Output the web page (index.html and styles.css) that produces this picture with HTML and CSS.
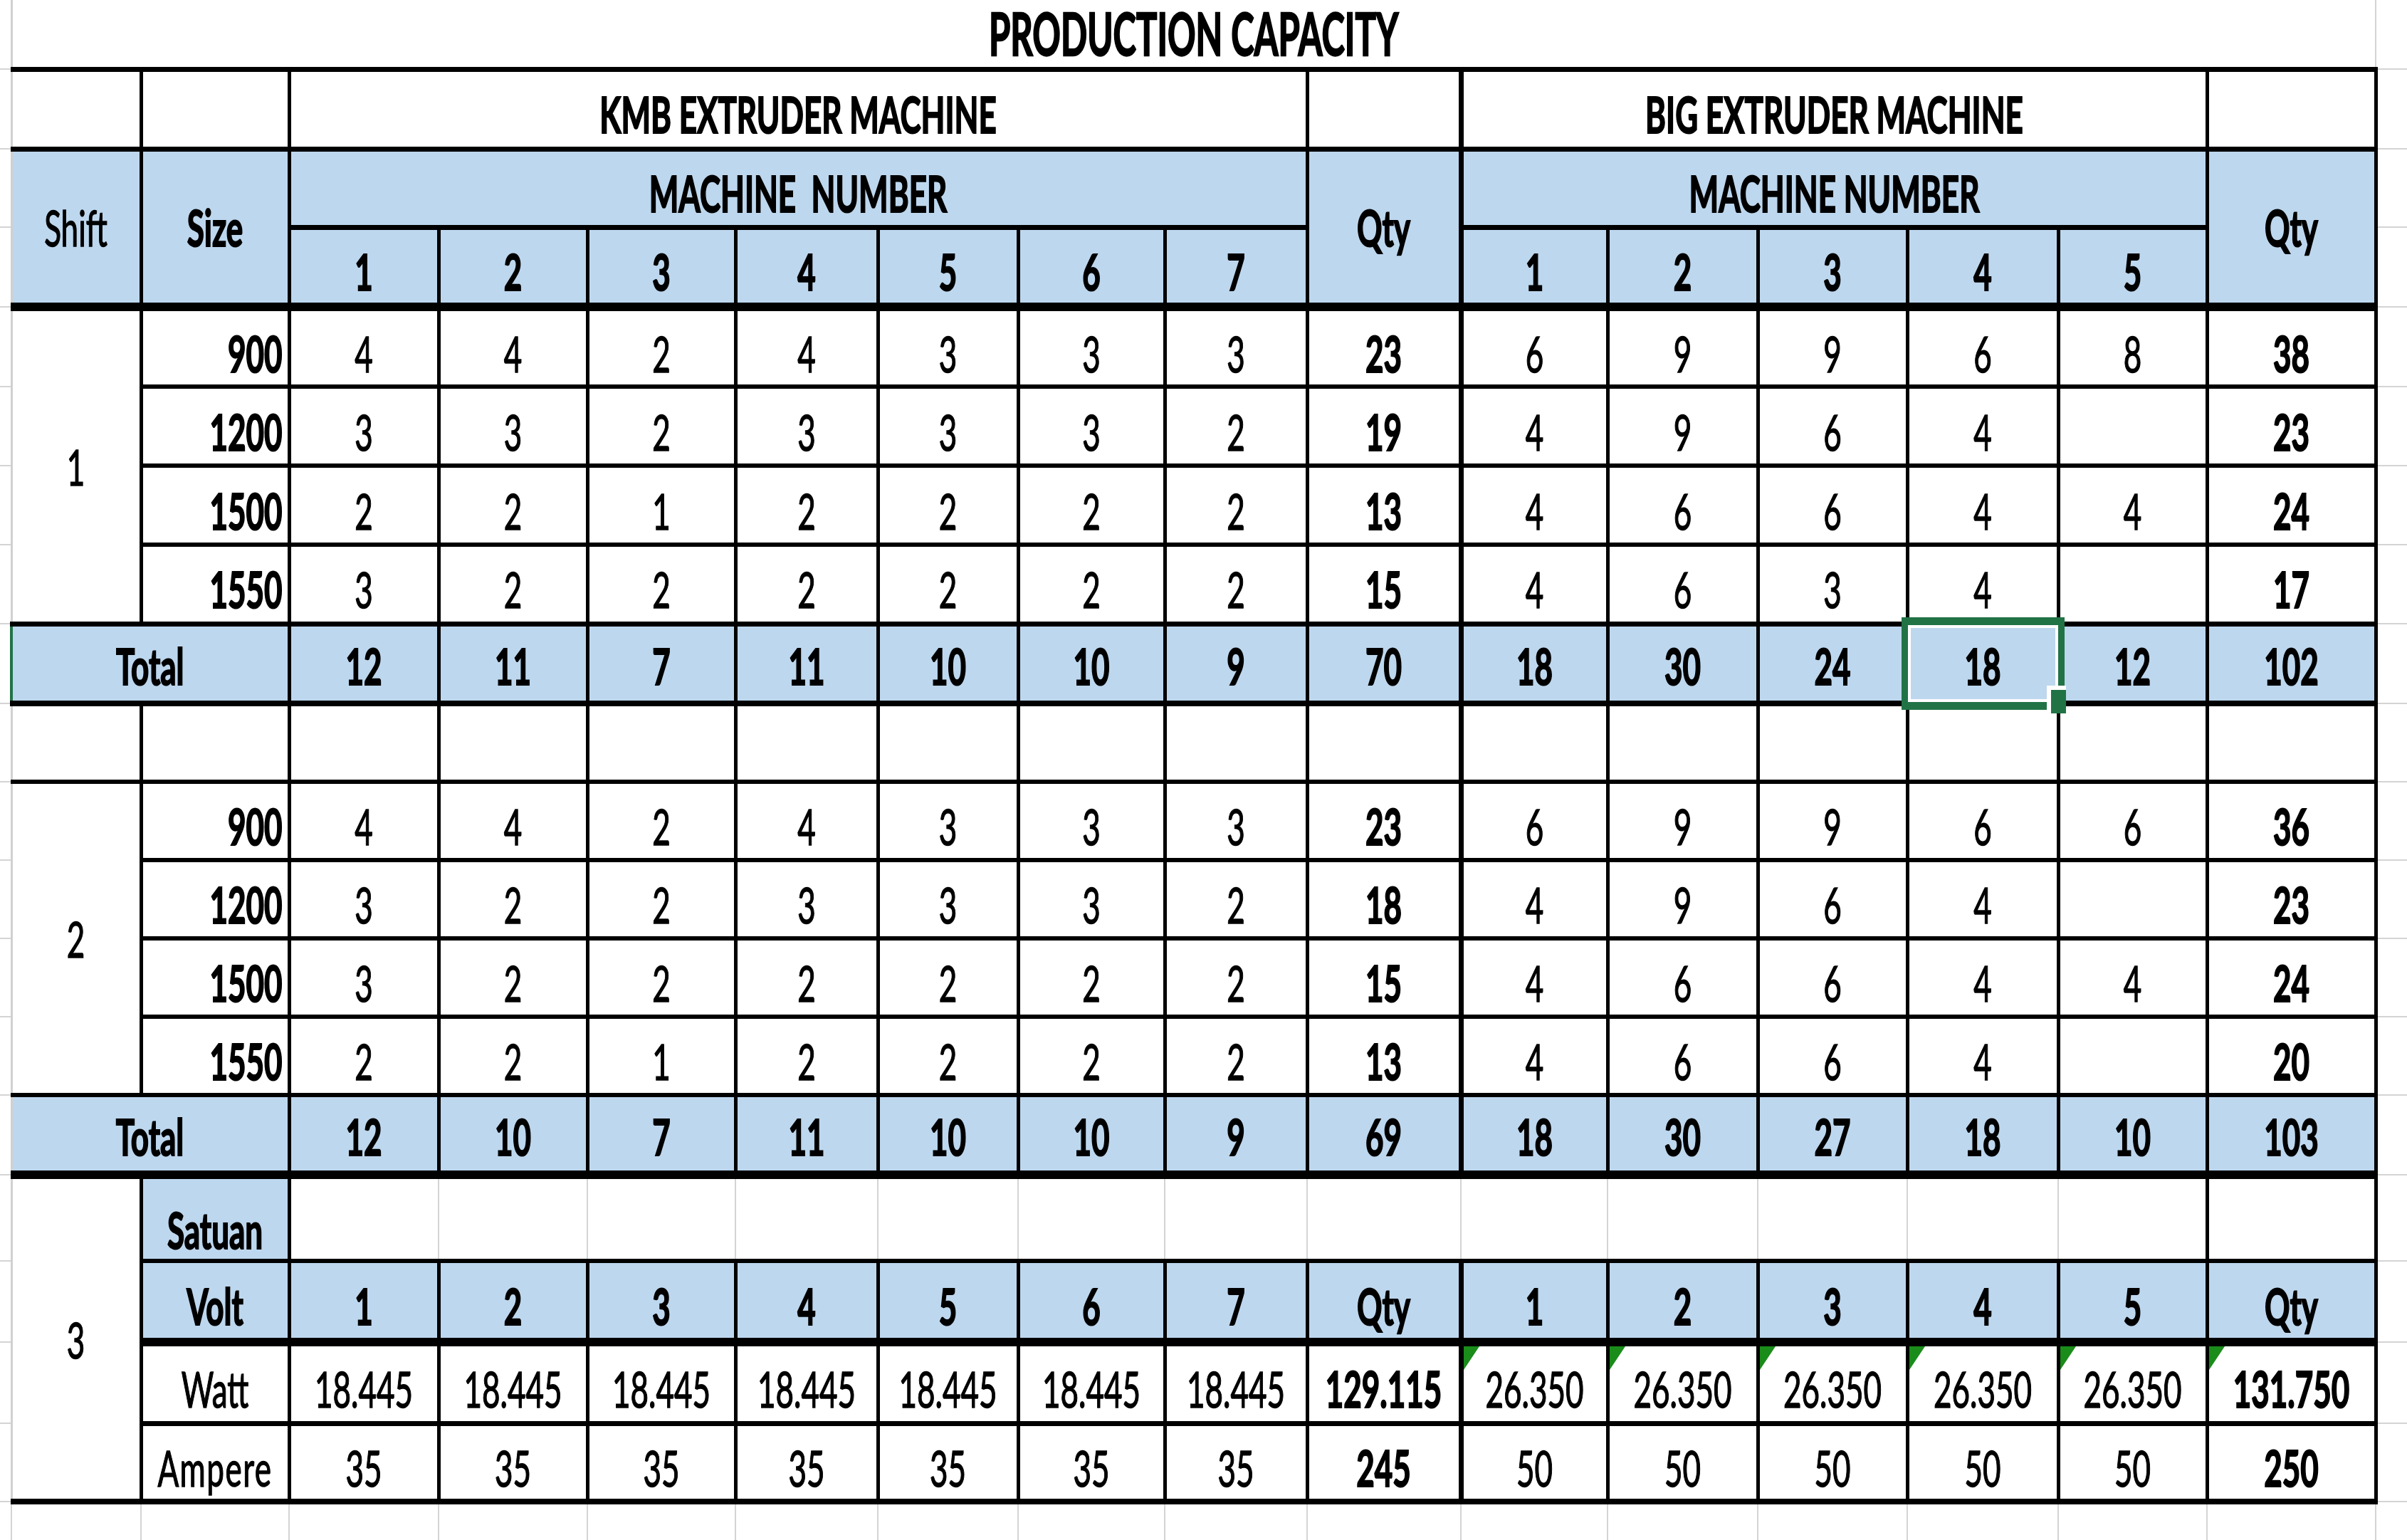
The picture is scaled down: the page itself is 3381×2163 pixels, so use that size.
FILE: index.html
```html
<!DOCTYPE html>
<html>
<head>
<meta charset="utf-8">
<title>Production Capacity</title>
<link rel="stylesheet" href="styles.css">
</head>
<body>
<div class="sheet">
<table class="grid">
<colgroup>
<col class="w16"><col class="w182"><col class="w208"><col class="w210"><col class="w209"><col class="w208"><col class="w200"><col class="w197"><col class="w206"><col class="w200"><col class="w216"><col class="w206"><col class="w211"><col class="w210"><col class="w212"><col class="w209"><col class="w237"><col class="w44">
</colgroup>
<tbody>
<tr class="h97"><td class="sl"></td><td class="ttl c1" colspan="16"><span class="x">PRODUCTION CAPACITY</span></td><td class="sr"></td></tr>

<tr class="t7 h112"><td class="sl"></td><td class="c1"></td><td></td><td colspan="7" class="w"><span class="x">KMB EXTRUDER MACHINE</span></td><td></td><td colspan="5" class="w sep"><span class="x">BIG EXTRUDER MACHINE</span></td><td></td><td class="sr"></td></tr>

<tr class="t7 h110"><td class="sl"></td><td class="c1 b m" rowspan="2"><span class="x">Shift</span></td><td class="b w m" rowspan="2"><span class="x">Size</span></td><td colspan="7" class="b w"><span class="x">MACHINE&nbsp; NUMBER</span></td><td class="b w m" rowspan="2"><span class="x">Qty</span></td><td colspan="5" class="b w sep"><span class="x">MACHINE NUMBER</span></td><td class="b w m" rowspan="2"><span class="x">Qty</span></td><td class="sr"></td></tr>

<tr class="t7 h112"><td class="sl"></td><td class="b w"><span class="x">1</span></td><td class="b w"><span class="x">2</span></td><td class="b w"><span class="x">3</span></td><td class="b w"><span class="x">4</span></td><td class="b w"><span class="x">5</span></td><td class="b w"><span class="x">6</span></td><td class="b w"><span class="x">7</span></td><td class="b w sep"><span class="x">1</span></td><td class="b w"><span class="x">2</span></td><td class="b w"><span class="x">3</span></td><td class="b w"><span class="x">4</span></td><td class="b w"><span class="x">5</span></td><td class="sr"></td></tr>

<tr class="t12 h112"><td class="sl"></td><td class="c1 m" rowspan="4"><span class="x">1</span></td><td class="r w"><span class="x">900</span></td><td><span class="x">4</span></td><td><span class="x">4</span></td><td><span class="x">2</span></td><td><span class="x">4</span></td><td><span class="x">3</span></td><td><span class="x">3</span></td><td><span class="x">3</span></td><td class="w"><span class="x">23</span></td><td class="sep"><span class="x">6</span></td><td><span class="x">9</span></td><td><span class="x">9</span></td><td><span class="x">6</span></td><td><span class="x">8</span></td><td class="w"><span class="x">38</span></td><td class="sr"></td></tr>

<tr class="h111"><td class="sl"></td><td class="r w"><span class="x">1200</span></td><td><span class="x">3</span></td><td><span class="x">3</span></td><td><span class="x">2</span></td><td><span class="x">3</span></td><td><span class="x">3</span></td><td><span class="x">3</span></td><td><span class="x">2</span></td><td class="w"><span class="x">19</span></td><td class="sep"><span class="x">4</span></td><td><span class="x">9</span></td><td><span class="x">6</span></td><td><span class="x">4</span></td><td></td><td class="w"><span class="x">23</span></td><td class="sr"></td></tr>

<tr class="h111"><td class="sl"></td><td class="r w"><span class="x">1500</span></td><td><span class="x">2</span></td><td><span class="x">2</span></td><td><span class="x">1</span></td><td><span class="x">2</span></td><td><span class="x">2</span></td><td><span class="x">2</span></td><td><span class="x">2</span></td><td class="w"><span class="x">13</span></td><td class="sep"><span class="x">4</span></td><td><span class="x">6</span></td><td><span class="x">6</span></td><td><span class="x">4</span></td><td><span class="x">4</span></td><td class="w"><span class="x">24</span></td><td class="sr"></td></tr>

<tr class="h111"><td class="sl"></td><td class="r w"><span class="x">1550</span></td><td><span class="x">3</span></td><td><span class="x">2</span></td><td><span class="x">2</span></td><td><span class="x">2</span></td><td><span class="x">2</span></td><td><span class="x">2</span></td><td><span class="x">2</span></td><td class="w"><span class="x">15</span></td><td class="sep"><span class="x">4</span></td><td><span class="x">6</span></td><td><span class="x">3</span></td><td><span class="x">4</span></td><td></td><td class="w"><span class="x">17</span></td><td class="sr"></td></tr>

<tr class="t7 h112 tot"><td class="sl"></td><td colspan="2" class="c1 gl b w"><span class="x">Total</span></td><td class="b w"><span class="x">12</span></td><td class="b w"><span class="x">11</span></td><td class="b w"><span class="x">7</span></td><td class="b w"><span class="x">11</span></td><td class="b w"><span class="x">10</span></td><td class="b w"><span class="x">10</span></td><td class="b w"><span class="x">9</span></td><td class="b w"><span class="x">70</span></td><td class="b w sep"><span class="x">18</span></td><td class="b w"><span class="x">30</span></td><td class="b w"><span class="x">24</span></td><td class="b w"><span class="x">18</span></td><td class="b w"><span class="x">12</span></td><td class="b w"><span class="x">102</span></td><td class="sr"></td></tr>

<tr class="t8 h110"><td class="sl"></td><td class="c1"></td><td></td><td></td><td></td><td></td><td></td><td></td><td></td><td></td><td></td><td class="sep"></td><td></td><td></td><td></td><td></td><td></td><td class="sr"></td></tr>

<tr class="h110"><td class="sl"></td><td class="c1 m" rowspan="4"><span class="x">2</span></td><td class="r w"><span class="x">900</span></td><td><span class="x">4</span></td><td><span class="x">4</span></td><td><span class="x">2</span></td><td><span class="x">4</span></td><td><span class="x">3</span></td><td><span class="x">3</span></td><td><span class="x">3</span></td><td class="w"><span class="x">23</span></td><td class="sep"><span class="x">6</span></td><td><span class="x">9</span></td><td><span class="x">9</span></td><td><span class="x">6</span></td><td><span class="x">6</span></td><td class="w"><span class="x">36</span></td><td class="sr"></td></tr>

<tr class="h110"><td class="sl"></td><td class="r w"><span class="x">1200</span></td><td><span class="x">3</span></td><td><span class="x">2</span></td><td><span class="x">2</span></td><td><span class="x">3</span></td><td><span class="x">3</span></td><td><span class="x">3</span></td><td><span class="x">2</span></td><td class="w"><span class="x">18</span></td><td class="sep"><span class="x">4</span></td><td><span class="x">9</span></td><td><span class="x">6</span></td><td><span class="x">4</span></td><td></td><td class="w"><span class="x">23</span></td><td class="sr"></td></tr>

<tr class="h110"><td class="sl"></td><td class="r w"><span class="x">1500</span></td><td><span class="x">3</span></td><td><span class="x">2</span></td><td><span class="x">2</span></td><td><span class="x">2</span></td><td><span class="x">2</span></td><td><span class="x">2</span></td><td><span class="x">2</span></td><td class="w"><span class="x">15</span></td><td class="sep"><span class="x">4</span></td><td><span class="x">6</span></td><td><span class="x">6</span></td><td><span class="x">4</span></td><td><span class="x">4</span></td><td class="w"><span class="x">24</span></td><td class="sr"></td></tr>

<tr class="h110"><td class="sl"></td><td class="r w"><span class="x">1550</span></td><td><span class="x">2</span></td><td><span class="x">2</span></td><td><span class="x">1</span></td><td><span class="x">2</span></td><td><span class="x">2</span></td><td><span class="x">2</span></td><td><span class="x">2</span></td><td class="w"><span class="x">13</span></td><td class="sep"><span class="x">4</span></td><td><span class="x">6</span></td><td><span class="x">6</span></td><td><span class="x">4</span></td><td></td><td class="w"><span class="x">20</span></td><td class="sr"></td></tr>

<tr class="h112 tot"><td class="sl"></td><td colspan="2" class="c1 b w"><span class="x">Total</span></td><td class="b w"><span class="x">12</span></td><td class="b w"><span class="x">10</span></td><td class="b w"><span class="x">7</span></td><td class="b w"><span class="x">11</span></td><td class="b w"><span class="x">10</span></td><td class="b w"><span class="x">10</span></td><td class="b w"><span class="x">9</span></td><td class="b w"><span class="x">69</span></td><td class="b w sep"><span class="x">18</span></td><td class="b w"><span class="x">30</span></td><td class="b w"><span class="x">27</span></td><td class="b w"><span class="x">18</span></td><td class="b w"><span class="x">10</span></td><td class="b w"><span class="x">103</span></td><td class="sr"></td></tr>

<tr class="t12 h121"><td class="sl"></td><td class="c1 m" rowspan="4"><span class="x">3</span></td><td class="b w sat"><span class="x">Satuan</span></td><td class="g"></td><td class="g"></td><td class="g"></td><td class="g"></td><td class="g"></td><td class="g"></td><td class="g"></td><td class="g"></td><td class="g"></td><td class="g"></td><td class="g"></td><td class="g"></td><td class="g"></td><td></td><td class="sr"></td></tr>

<tr class="h114"><td class="sl"></td><td class="b w"><span class="x">Volt</span></td><td class="b w"><span class="x">1</span></td><td class="b w"><span class="x">2</span></td><td class="b w"><span class="x">3</span></td><td class="b w"><span class="x">4</span></td><td class="b w"><span class="x">5</span></td><td class="b w"><span class="x">6</span></td><td class="b w"><span class="x">7</span></td><td class="b w"><span class="x">Qty</span></td><td class="b w sep"><span class="x">1</span></td><td class="b w"><span class="x">2</span></td><td class="b w"><span class="x">3</span></td><td class="b w"><span class="x">4</span></td><td class="b w"><span class="x">5</span></td><td class="b w"><span class="x">Qty</span></td><td class="sr"></td></tr>

<tr class="t12 h114"><td class="sl"></td><td><span class="x">Watt</span></td><td><span class="x">18.445</span></td><td><span class="x">18.445</span></td><td><span class="x">18.445</span></td><td><span class="x">18.445</span></td><td><span class="x">18.445</span></td><td><span class="x">18.445</span></td><td><span class="x">18.445</span></td><td class="w"><span class="x">129.115</span></td><td class="t sep"><i class="tri"></i><span class="x">26.350</span></td><td class="t"><i class="tri"></i><span class="x">26.350</span></td><td class="t"><i class="tri"></i><span class="x">26.350</span></td><td class="t"><i class="tri"></i><span class="x">26.350</span></td><td class="t"><i class="tri"></i><span class="x">26.350</span></td><td class="t w"><i class="tri"></i><span class="x">131.750</span></td><td class="sr"></td></tr>

<tr class="t7 h110"><td class="sl"></td><td><span class="x amp">Ampere</span></td><td><span class="x">35</span></td><td><span class="x">35</span></td><td><span class="x">35</span></td><td><span class="x">35</span></td><td><span class="x">35</span></td><td><span class="x">35</span></td><td><span class="x">35</span></td><td class="w"><span class="x">245</span></td><td class="sep"><span class="x">50</span></td><td><span class="x">50</span></td><td><span class="x">50</span></td><td><span class="x">50</span></td><td><span class="x">50</span></td><td class="w"><span class="x">250</span></td><td class="sr"></td></tr>

<tr class="t8 h54 ext"><td class="sl"></td><td class="c1 ex"></td><td class="ex"></td><td class="ex"></td><td class="ex"></td><td class="ex"></td><td class="ex"></td><td class="ex"></td><td class="ex"></td><td class="ex"></td><td class="ex"></td><td class="ex"></td><td class="ex"></td><td class="ex"></td><td class="ex"></td><td class="ex"></td><td class="ex"></td><td class="sr"></td></tr>
</tbody>
</table>
<div class="selbox"></div>
<div class="handle"></div>
</div>
</body>
</html>
```

FILE: styles.css
```css
html, body {
  margin: 0;
  padding: 0;
  background: #ffffff;
}
body {
  width: 3381px;
  height: 2163px;
  overflow: hidden;
  font-family: Lato, "Open Sans", "DejaVu Sans", sans-serif;
  color: #000000;
}
.sheet {
  position: relative;
  width: 3381px;
  height: 2163px;
}
.grid {
  border-collapse: collapse;
  table-layout: fixed;
  width: 3381px;
}
.w16 { width: 16px; }
.w182 { width: 182px; }
.w208 { width: 208px; }
.w210 { width: 210px; }
.w209 { width: 209px; }
.w200 { width: 200px; }
.w197 { width: 197px; }
.w206 { width: 206px; }
.w216 { width: 216px; }
.w211 { width: 211px; }
.w212 { width: 212px; }
.w237 { width: 237px; }
.w44 { width: 44px; }

.h97 { height: 97px; }
.h110 { height: 110px; }
.h111 { height: 111px; }
.h112 { height: 112px; }
.h114 { height: 114px; }
.h121 { height: 121px; }
.h54 { height: 54px; }

.grid td {
  border-top: 6px solid #000;
  border-bottom: 6px solid #000;
  border-left: 5px solid #000;
  border-right: 5px solid #000;
  padding: 14px 0 0 0;
  text-align: center;
  vertical-align: middle;
  font-size: 44px;
  line-height: 1;
  font-weight: 400;
  white-space: nowrap;
  -webkit-text-stroke: 0.9px #000;
}
.grid tr.t7 > td { border-top-width: 7px; }
.grid tr.t8 > td { border-top-width: 8px; }
.grid tr.t12 > td { border-top-width: 12px; }
.grid tr.tot > td { padding-top: 6px; }

.grid td.sl,
.grid td.sr {
  border: none;
  border-bottom: 2px solid #d4d4d4;
  padding: 0;
}
.grid tr.ext > td.sl,
.grid tr.ext > td.sr { border-bottom: none; }

.grid td.c1 { border-left: 3px solid #d0d0d0; }
.grid td.gl { border-left: 4px solid #217346; }
.grid td.sep { border-left-width: 7px; }
.grid td.g {
  border-left: 2px solid #d4d4d4;
  border-right: 2px solid #d4d4d4;
}
.grid td.ex {
  border-left: 2px solid #d4d4d4;
  border-right: 2px solid #d4d4d4;
  border-bottom: none;
  padding: 0;
}
.grid td.ttl {
  border-top: none;
  border-bottom: none;
  border-right: 2px solid #d4d4d4;
  font-size: 49px;
  font-weight: 700;
  padding: 0;
  -webkit-text-stroke: 1.4px #000;
}
.grid td.b { background: #bdd7ee; }
.grid td.w {
  font-weight: 700;
  -webkit-text-stroke: 1.3px #000;
}
.grid td.m { padding-top: 0; }
.grid td.r { text-align: right; padding-right: 7px; }
.grid td.sat { padding-top: 30px; }
.grid td.t { position: relative; }

.x {
  display: inline-block;
  transform: scaleY(1.6);
}
.x.amp { letter-spacing: 1.5px; }
.grid td.ttl .x { transform: scaleY(1.68); }

.tri {
  position: absolute;
  top: 0;
  left: 0;
  width: 0;
  height: 0;
  border-top: 33px solid #1a8c1a;
  border-right: 22px solid transparent;
}

.selbox {
  position: absolute;
  left: 2671px;
  top: 867px;
  width: 229px;
  height: 130px;
  box-sizing: border-box;
  border: 11px solid #217346;
  border-left-width: 9px;
  border-right-width: 9px;
  box-shadow: inset 0 0 0 4px #ffffff;
}
.handle {
  position: absolute;
  left: 2875px;
  top: 963px;
  width: 21px;
  height: 33px;
  background: #217346;
  border-left: 6px solid #ffffff;
  border-top: 6px solid #ffffff;
}
```
